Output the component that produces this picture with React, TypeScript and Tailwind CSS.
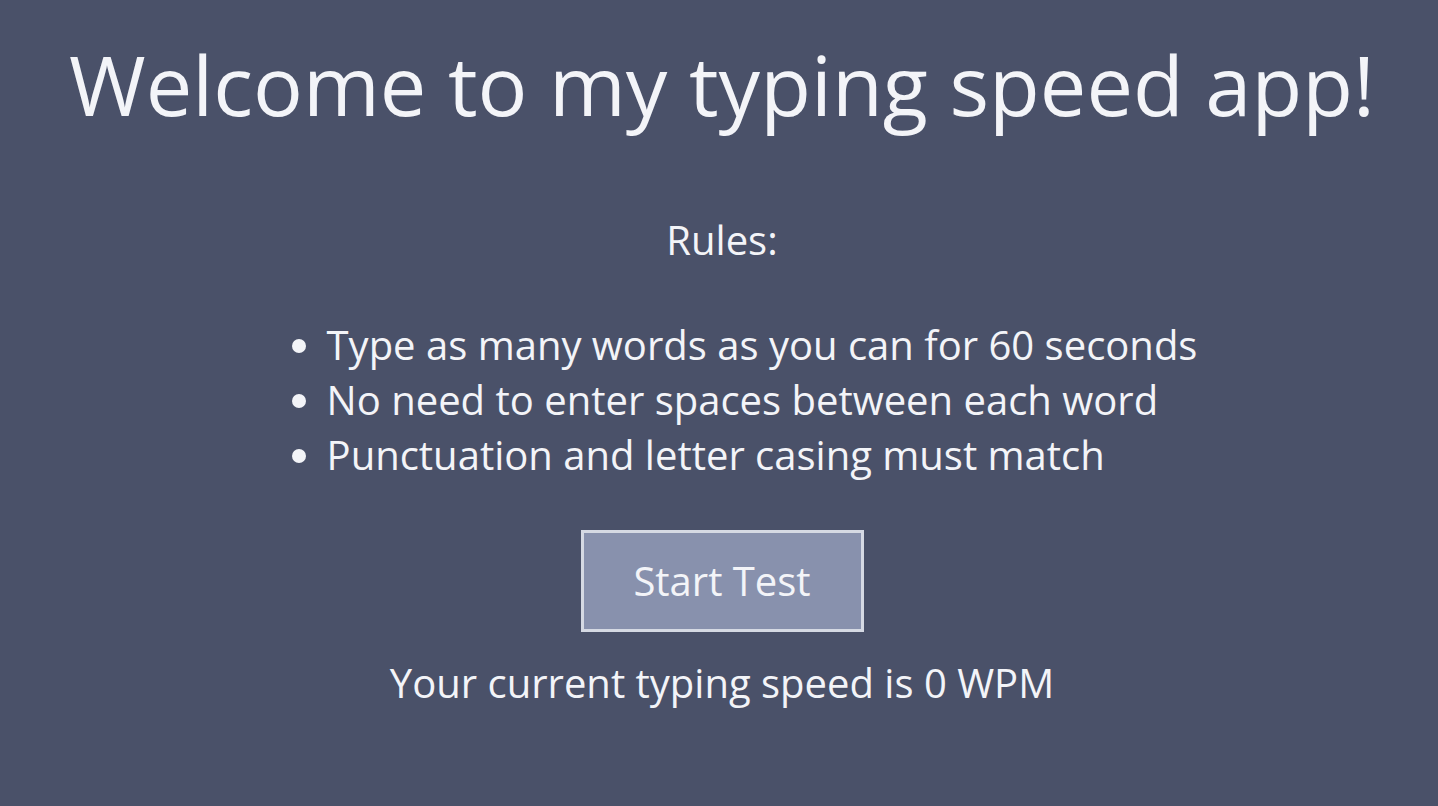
import React from 'react';

const rules = [
  'Type as many words as you can for 60 seconds',
  'No need to enter spaces between each word',
  'Punctuation and letter casing must match',
];

const App: React.FC = () => {
  const [wpm] = React.useState(0);

  return (
    <div
      className="min-h-screen w-full bg-[#4a5169] text-[#f3f4f8] flex flex-col items-center pl-[6px]"
      style={{ fontFamily: '"Open Sans", "Noto Sans", sans-serif' }}
    >
      <h1 className="mt-[34px] text-[83px] leading-[100px] font-normal text-center whitespace-nowrap">
        Welcome to my typing speed app!
      </h1>

      <p className="mt-[79px] text-[40px] leading-[54px]">Rules:</p>

      <ul className="mt-[50px] ml-[40px] list-disc pl-[40px] text-[40px] leading-[55px]">
        {rules.map((rule) => (
          <li key={rule}>{rule}</li>
        ))}
      </ul>

      <button
        type="button"
        className="mt-[48px] w-[283px] h-[102px] bg-[#8891ad] border-[3px] border-[#d5d9e3] text-[40px] text-[#f3f4f8]"
      >
        Start Test
      </button>

      <p className="mt-[24px] text-[40px] leading-[54px]">Your current typing speed is {wpm} WPM</p>
    </div>
  );
};

export default App;
